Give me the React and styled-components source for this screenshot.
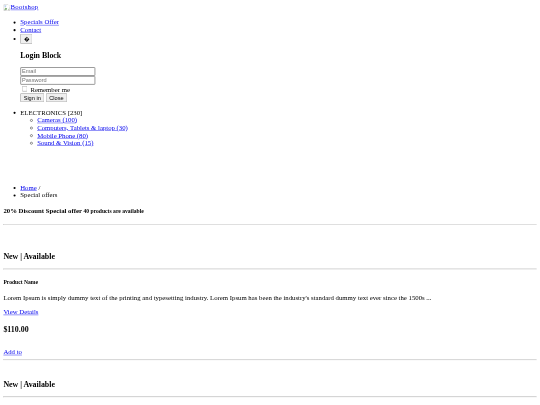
import React from 'react'
import styled, { createGlobalStyle } from 'styled-components'

const GlobalStyle = createGlobalStyle`
  html, body {
    margin: 0;
    background: #fff;
  }
`

const Viewport = styled.div`
  width: 540px;
  height: 405px;
  overflow: hidden;
  filter: blur(0.22px);
`

const Page = styled.div`
  width: 1280px;
  box-sizing: border-box;
  padding: 8px;
  color: #000;
  font-family: "Liberation Serif", "Times New Roman", serif;
  font-size: 16px;
  transform: scale(0.421875);
  transform-origin: 0 0;
`

const Link = styled.a`
  color: #0000ee;
  text-decoration: underline;
`

const LogoLink = styled(Link)`
  display: inline-flex;
  align-items: flex-end;
  gap: 1px;
  letter-spacing: 0.6px;
`

const List = styled.ul`
  margin: ${props => (props.$nested ? '0' : '16px 0')};
  padding-left: 40px;
  list-style-type: ${props => (props.$nested ? 'circle' : 'disc')};
`

const TopMenu = styled(List)`
  margin-top: 14px;
`

const CartButton = styled.button`
  font-size: 13.333px;
`

const LoginTitle = styled.h3`
  margin: 16px 0 17px;
  font-size: 18.72px;
`

const Field = styled.input`
  display: block;
  box-sizing: border-box;
  width: 178px;
  height: 21px;
  padding: 1px 2px;
  border: 2px solid #8a8a8a;
  border-radius: 2px;
  font-family: "Liberation Sans", Arial, sans-serif;
  font-size: 13.333px;
`

const RememberLabel = styled.label`
  display: block;
`

const FormButton = styled.button`
  margin-right: 4px;
  font-family: "Liberation Sans", Arial, sans-serif;
  font-size: 13.333px;
`

const Breadcrumbs = styled(List)`
  margin-top: 88px;
`

const OfferTitle = styled.h4`
  margin: 20px 0 21px;
  font-size: 16px;

  small {
    font-size: 13.333px;
  }
`

const Rule = styled.hr`
  margin: 8px 0;
`

const ProductStatus = styled.h3`
  margin: 0;
  padding-top: ${props => (props.$first ? '56px' : '38px')};
  padding-bottom: 10px;
  font-size: 18.72px;
`

const ProductName = styled.h5`
  margin: 22px 0 20px;
  font-size: 13.28px;
`

const Description = styled.p`
  margin: 16px 0;
`

const Price = styled.h3`
  margin: 20px 0 35px;
  font-size: 18.72px;
`

const BrokenImage = () => (
  <svg width="16" height="16" viewBox="0 0 16 16">
    <path d="M1 1h10l4 4v10H1z" fill="#fff" stroke="#9a9a9a" />
    <path d="M2 13l4-5 3 3 2-2 3 4z" fill="#6fa35f" />
    <path d="M3 3h4v3H3z" fill="#9fc3ef" />
    <path d="M9 1l-3 6 3 3-2 5h4l4-10-4-4z" fill="#fff" />
  </svg>
)

const categories = ['Cameras (100)', 'Computers, Tablets & laptop (30)', 'Mobile Phone (80)', 'Sound & Vision (15)']

const App = () => {
  return (
    <Viewport>
      <GlobalStyle />
      <Page>
        <LogoLink href="/"><BrokenImage />Bootshop</LogoLink>
        <TopMenu>
          <li><Link href="/">Specials Offer</Link></li>
          <li><Link href="/">Contact</Link></li>
          <li>
            <CartButton>�</CartButton>
            <LoginTitle>Login Block</LoginTitle>
            <form>
              <Field type="text" placeholder="Email" />
              <Field type="password" placeholder="Password" />
              <RememberLabel><input type="checkbox" /> Remember me</RememberLabel>
              <FormButton type="button">Sign in</FormButton>
              <FormButton type="button">Close</FormButton>
            </form>
          </li>
        </TopMenu>
        <List>
          <li>
            ELECTRONICS [230]
            <List $nested>
              {categories.map(name => (
                <li key={name}><Link href="/">{name}</Link></li>
              ))}
            </List>
          </li>
        </List>
        <Breadcrumbs>
          <li><Link href="/">Home</Link> /</li>
          <li>Special offers</li>
        </Breadcrumbs>
        <OfferTitle>20% Discount Special offer <small>40 products are available</small></OfferTitle>
        <Rule />
        <ProductStatus $first>New | Available</ProductStatus>
        <Rule />
        <ProductName>Product Name</ProductName>
        <Description>
          Lorem Ipsum is simply dummy text of the printing and typesetting industry. Lorem Ipsum has been the industry's standard dummy text ever since the 1500s ...
        </Description>
        <Link href="/">View Details</Link>
        <Price>$110.00</Price>
        <Link href="/">Add to</Link>
        <Rule />
        <ProductStatus>New | Available</ProductStatus>
        <Rule />
      </Page>
    </Viewport>
  )
}

export default App
